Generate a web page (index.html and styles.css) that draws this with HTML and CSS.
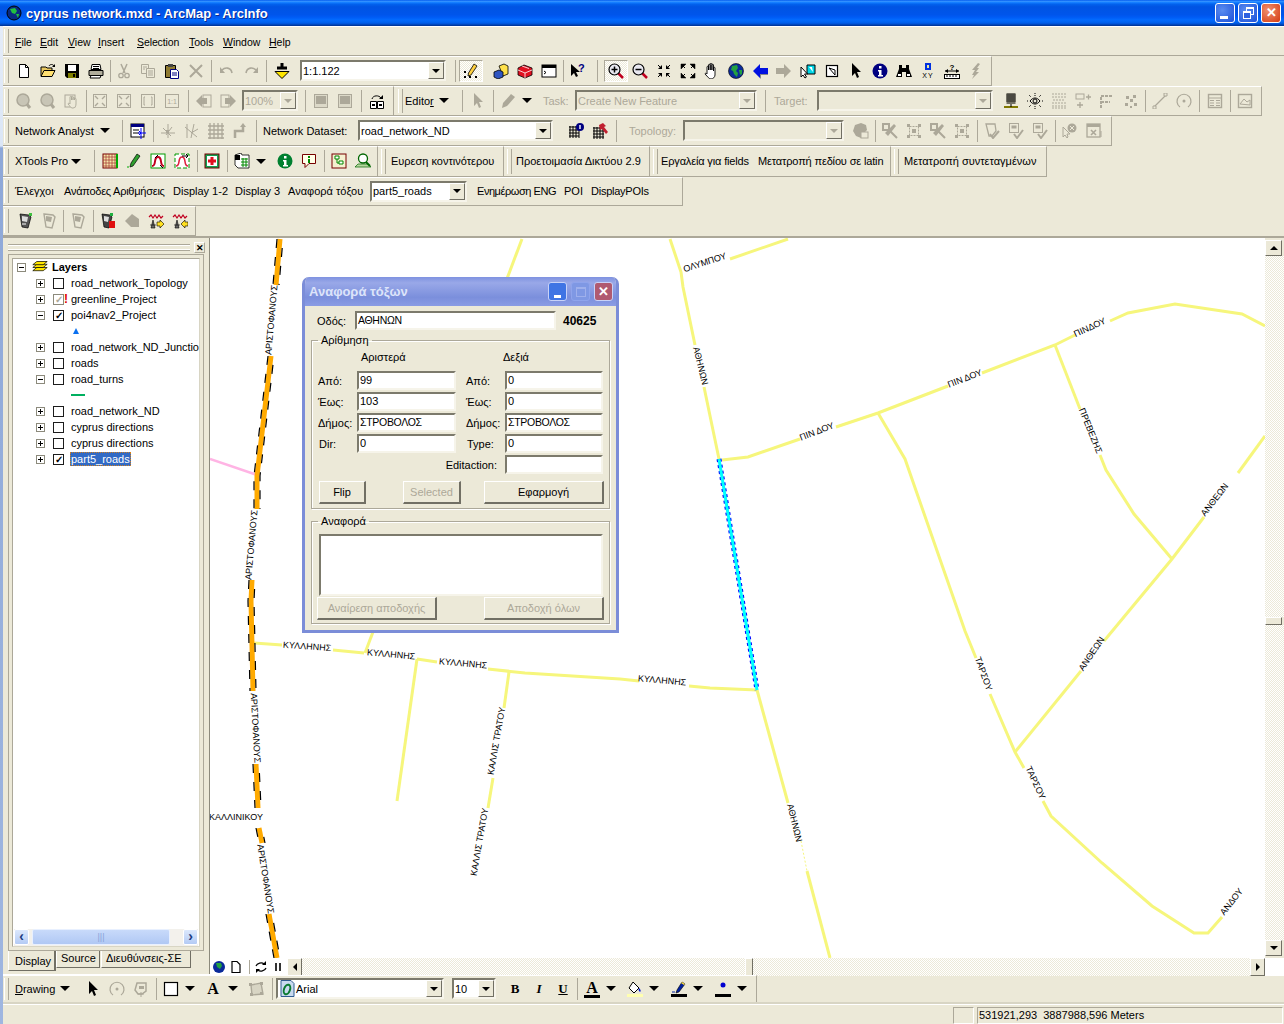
FILE: index.html
```html
<!DOCTYPE html>
<html lang="en">
<head>
    <meta charset="UTF-8">
    <title>cyprus network.mxd - ArcMap - ArcInfo</title>
    <link rel="stylesheet" href="styles.css">
</head>
<body>
<!-- icon sheet -->
<svg class="defs" aria-hidden="true">
    <symbol id="i-new" viewBox="0 0 16 16"><path d="M3.5 1.5h6l3 3v10h-9z" fill="#fff" stroke="#000"/><path d="M9.5 1.5v3h3" fill="none" stroke="#000"/></symbol>
    <symbol id="i-open" viewBox="0 0 16 16"><path d="M1 13V4h5l1 1h5v2" fill="#e8c860" stroke="#000"/><path d="M1 13.5L4 7.5h11l-3 6z" fill="#ffe070" stroke="#000"/><path d="M9 3c1-2 4-2 5 0" fill="none" stroke="#000"/><path d="M15 1v3h-3z"/></symbol>
    <symbol id="i-save" viewBox="0 0 16 16"><path d="M1 1h14v14H3l-2-2z"/><rect x="4" y="2" width="8" height="6" fill="#fff"/><rect x="4" y="10" width="8" height="5" fill="#808000"/><rect x="9" y="11" width="2" height="3"/></symbol>
    <symbol id="i-print" viewBox="0 0 16 16"><path d="M4 1.5h8l1 5H3z" fill="#fff" stroke="#000"/><path d="M1 7.5h14v5H1z" fill="#b0ad9c" stroke="#000"/><path d="M3 12.500h10l-1 2.500H2z" fill="#fff" stroke="#000"/><path d="M5 3.500h6M5 5.500h6" stroke="#000"/></symbol>
    <symbol id="i-cut" viewBox="0 0 16 16"><path d="M5 1l4 9M11 1L7 10" stroke="currentColor" stroke-width="1.500" fill="none"/><circle cx="5" cy="12.500" r="2.200" fill="none" stroke="currentColor" stroke-width="1.300"/><circle cx="11" cy="12.500" r="2.200" fill="none" stroke="currentColor" stroke-width="1.300"/></symbol>
    <symbol id="i-copy" viewBox="0 0 16 16"><path d="M1.500 1.500h7v9h-7z" fill="none" stroke="currentColor"/><path d="M6.500 5.500h8v9h-8z" fill="#ece9d8" stroke="currentColor"/><path d="M3 4h4M3 6h2M8 8h5M8 10h5M8 12h5" stroke="currentColor"/></symbol>
    <symbol id="i-paste" viewBox="0 0 16 16"><path d="M1.500 2.500h10v12h-10z" fill="#8f7a30" stroke="#000"/><rect x="4" y="1" width="5" height="3" fill="#444"/><path d="M6.500 6.500h6l2 2v7h-8z" fill="#fff" stroke="#000080"/><path d="M8 10h5M8 12h5" stroke="#000080"/></symbol>
    <symbol id="i-x" viewBox="0 0 16 16"><path d="M2 2l12 12M14 2L2 14" stroke="currentColor" stroke-width="2" fill="none"/></symbol>
    <symbol id="i-undo" viewBox="0 0 16 16"><path d="M3 7c3-3 9-3 10 3" stroke="currentColor" stroke-width="1.600" fill="none"/><path d="M1 4v6h5z" fill="currentColor"/></symbol>
    <symbol id="i-redo" viewBox="0 0 16 16"><path d="M13 7C10 4 4 4 3 10" stroke="currentColor" stroke-width="1.600" fill="none"/><path d="M15 4v6h-5z" fill="currentColor"/></symbol>
    <symbol id="i-add" viewBox="0 0 16 16"><path d="M1 8.500h14L8 15.500z" fill="#ffe600" stroke="#000"/><path d="M6.500 0h3v3.500H13v3H3v-3h3.500z"/></symbol>
    <symbol id="i-edit" viewBox="0 0 16 16"><path d="M11 1l3 2-6 9-3 1 .5-3z" fill="#ffd040" stroke="#000" stroke-width=".8"/><path d="M1 14h2M6 14h2M12 14h2M2 8v2" stroke="#000" stroke-width="2"/></symbol>
    <symbol id="i-cat" viewBox="0 0 16 16"><path d="M6 3l5-2 4 2v8l-5 2z" fill="#ffe14a" stroke="#000" stroke-width=".8"/><path d="M1 9l5-2 4 2v5l-5 2-4-2z" fill="#2f55c0" stroke="#000" stroke-width=".8"/></symbol>
    <symbol id="i-box" viewBox="0 0 16 16"><path d="M1 5l6-3 8 3v7l-7 3-7-3z" fill="#e01020" stroke="#000" stroke-width=".8"/><path d="M1 7l7 3 7-3M8 10v5M5 3l7 2.500" stroke="#fff" stroke-width=".8" fill="none"/></symbol>
    <symbol id="i-cmd" viewBox="0 0 16 16"><rect x="1" y="2" width="14" height="12" fill="#fff" stroke="#000"/><rect x="1" y="2" width="14" height="3"/><path d="M3 8l2 1.500L3 11" fill="none" stroke="#000"/></symbol>
    <symbol id="i-zin" viewBox="0 0 16 16"><path d="M10 10l5 5" stroke="#c00020" stroke-width="2.500"/><circle cx="6.500" cy="6.500" r="5.500" fill="#e8e8f0" stroke="#000" stroke-width="1.200"/><path d="M6.500 3.500v6M3.500 6.500h6" stroke="#000" stroke-width="1.500"/></symbol>
    <symbol id="i-zout" viewBox="0 0 16 16"><path d="M10 10l5 5" stroke="#c00020" stroke-width="2.500"/><circle cx="6.500" cy="6.500" r="5.500" fill="#e8e8f0" stroke="#000" stroke-width="1.200"/><path d="M3.500 6.500h6" stroke="#000" stroke-width="1.500"/></symbol>
    <symbol id="i-fixin" viewBox="0 0 16 16"><path d="M6 2v4H2zM10 2v4h4zM6 14v-4H2zM10 14v-4h4z" fill="#000"/><path d="M2 2l3 3M14 2l-3 3M2 14l3-3M14 14l-3-3" stroke="#000"/></symbol>
    <symbol id="i-fixout" viewBox="0 0 16 16"><path d="M1 1h5L1 6zM15 1h-5l5 5zM1 15h5l-5-5zM15 15h-5l5-5z" fill="#000" stroke="#000" stroke-width=".5"/><path d="M2 2l3 3M14 2l-3 3M2 14l3-3M14 14l-3-3" stroke="#000"/></symbol>
    <symbol id="i-hand" viewBox="0 0 16 16"><path d="M3 8V4c0-1 1.500-1 1.500 0v3-5c0-1 1.700-1 1.700 0v5-6c0-1 1.700-1 1.700 0v6-5c0-1 1.600-1 1.600 0v6-3c0-1 1.500-1 1.500 0v7c0 2-2 4-4 4H7c-2 0-3-2-6-5 0-1 1-1 2 0z" fill="#fff" stroke="#000" stroke-width=".9"/></symbol>
    <symbol id="i-globe" viewBox="0 0 16 16"><circle cx="8" cy="8" r="7.500" fill="#0a2a9a" stroke="#000" stroke-width=".6"/><path d="M4 3l5-1 1 3-2 3 2 2-1 4-3-3-1-3-2-1zM11 7l3 0 0 4-2 1z" fill="#22a040"/></symbol>
    <symbol id="i-back" viewBox="0 0 16 16"><path d="M1 8l7-7v4h8v6H8v4z" fill="#0010e0"/><path d="M8 15v-4h8v1H9v4z" fill="#888"/></symbol>
    <symbol id="i-fwd" viewBox="0 0 16 16"><path d="M15 8L8 1v4H0v6h8v4z" fill="currentColor"/></symbol>
    <symbol id="i-sel" viewBox="0 0 16 16"><path d="M7 2h8v9H7z" fill="#00d8e8" stroke="#000"/><path d="M9 4l4 5-1-5z" fill="#fff"/><path d="M1 4v10l2-2 2 3 1.500-1-2-3h3z" fill="#fff" stroke="#000"/></symbol>
    <symbol id="i-clear" viewBox="0 0 16 16"><rect x="2.500" y="2.500" width="11" height="11" fill="#fff" stroke="#000" stroke-width="1.200"/><path d="M5 5l6 2 0 5z" fill="none" stroke="#000"/></symbol>
    <symbol id="i-ptr" viewBox="0 0 16 16"><path d="M4 0v13l3-3 2 5 2-1-2-5h4z" fill="currentColor"/></symbol>
    <symbol id="i-info" viewBox="0 0 16 16"><circle cx="8" cy="8" r="7.500" fill="#000080"/><rect x="7" y="3" width="2.500" height="2.500" fill="#fff"/><path d="M6 7h3.500v5H11v1.500H6V12h1V8.500H6z" fill="#fff"/></symbol>
    <symbol id="i-bino" viewBox="0 0 16 16"><path d="M3 2h3v3h4V2h3v4l3 8H10V9H6v5H0l3-8z"/><rect x="2" y="11" width="3" height="2" fill="#fff"/><rect x="11" y="11" width="3" height="2" fill="#fff"/></symbol>
    <symbol id="i-flash" viewBox="0 0 16 16"><path d="M10 0L4 7h3l-3 5h2l-2 4 7-7H8l3-4H9l3-4z" fill="currentColor"/></symbol>
    <symbol id="g-zin" viewBox="0 0 16 16"><path d="M10 10l4 5" stroke="currentColor" stroke-width="3"/><circle cx="7" cy="7" r="6" fill="#c8c5b6" stroke="currentColor" stroke-width="1.500"/></symbol>
    <symbol id="g-hand" viewBox="0 0 16 16"><rect x="1" y="2" width="10" height="12" fill="none" stroke="currentColor"/><path d="M6 8V4c0-1 1.500-1 1.500 0v3-3c0-1 1.500-1 1.500 0v3-2c0-1 1.500-1 1.500 0v2-1c0-1 1.500-1 1.500 0v5c0 2-1 4-3 4H8c-1 0-2-2-4-4 0-1 1-1 2 0z" fill="#ece9d8" stroke="currentColor" stroke-width=".9"/></symbol>
    <symbol id="g-fix" viewBox="0 0 16 16"><rect x="1.500" y="1.500" width="13" height="13" fill="none" stroke="currentColor"/><path d="M3 3l3 3M13 3l-3 3M3 13l3-3M13 13l-3-3" stroke="currentColor" stroke-width="1.400"/></symbol>
    <symbol id="g-frame" viewBox="0 0 16 16"><rect x="1.500" y="1.500" width="13" height="13" fill="none" stroke="currentColor"/><path d="M5 4H4v8h1M11 4h1v8h-1" fill="none" stroke="currentColor"/></symbol>
    <symbol id="g-pback" viewBox="0 0 16 16"><rect x="7" y="2" width="8" height="12" fill="#ece9d8" stroke="currentColor"/><path d="M0 8l6-6v3h5v6H6v3z" fill="currentColor"/></symbol>
    <symbol id="g-pfwd" viewBox="0 0 16 16"><rect x="1" y="2" width="8" height="12" fill="#ece9d8" stroke="currentColor"/><path d="M16 8l-6-6v3H5v6h5v3z" fill="currentColor"/></symbol>
    <symbol id="g-page" viewBox="0 0 16 16"><rect x="1.500" y="1.500" width="13" height="13" fill="#dcd9c8" stroke="currentColor"/><rect x="3" y="3" width="10" height="8" fill="currentColor"/></symbol>
    <symbol id="i-rotframe" viewBox="0 0 16 16"><path d="M1.500 8.500h6v7h-6zM8.500 8.500h6v7h-6z" fill="#fff" stroke="#000"/><path d="M3 11h3v2H3zM10 11h3v2h-3z" fill="#000"/><path d="M3 6c1-4 7-4 9-1" fill="none" stroke="#000"/><path d="M14 2v4h-4z"/></symbol>
    <symbol id="g-pen" viewBox="0 0 16 16"><path d="M11 1l4 3-8 9-5 2 1-5z" fill="currentColor"/></symbol>
    <symbol id="i-grid" viewBox="0 0 16 16"><path d="M1 13h14v2H1z" fill="#ffee00"/><path d="M3 0h10v11H3z" fill="#b0ad9c"/><path d="M3 2h10M3 4h10M3 6h10M3 8h10M5 0v11M7 0v11M9 0v11M11 0v11" stroke="#000" stroke-width=".7"/><path d="M1 14h14M8 11v3" stroke="#000"/></symbol>
    <symbol id="i-eye" viewBox="0 0 16 16"><circle cx="8" cy="8" r="2" fill="none" stroke="#000"/><path d="M3 8c3-4 7-4 10 0-3 4-7 4-10 0z" fill="none" stroke="#000"/><path d="M2 2l2 2M14 2l-2 2M2 14l2-2M14 14l-2-2M8 0v3M8 13v3M0 8h1M15 8h1" stroke="#000" stroke-dasharray="1 1"/></symbol>
    <symbol id="g-att" viewBox="0 0 16 16"><path d="M1 1h14M1 4h14M2 7h12M1 10h14M1 13h14M1 15h14" stroke="currentColor" stroke-dasharray="2 1"/></symbol>
    <symbol id="g-nodes" viewBox="0 0 16 16"><rect x="1" y="1" width="8" height="5" fill="none" stroke="currentColor"/><path d="M11 4h5M13.500 1.500v5M5 9v6M2 12h6" stroke="currentColor" stroke-width="1.300"/></symbol>
    <symbol id="g-step" viewBox="0 0 16 16"><path d="M2 15V3h12M2 9h9" fill="none" stroke="currentColor" stroke-width="2" stroke-dasharray="3 1"/></symbol>
    <symbol id="g-dots" viewBox="0 0 16 16"><path d="M3 3h3v3H3zM10 2h3v3h-3zM7 6h3v3H7zM2 10h3v3H2zM11 10h3v3h-3zM7 13h2v2H7z" fill="currentColor"/></symbol>
    <symbol id="g-line" viewBox="0 0 16 16"><path d="M2 14L14 2" stroke="currentColor" stroke-width="1.200"/><path d="M1 13h3v3H1zM12 0h3v3h-3z" fill="#ece9d8" stroke="currentColor"/></symbol>
    <symbol id="g-rot" viewBox="0 0 16 16"><path d="M4 14a7 7 0 1 1 8 0" fill="none" stroke="currentColor" stroke-width="1.200"/><circle cx="8" cy="8" r="1.500" fill="currentColor"/></symbol>
    <symbol id="g-table" viewBox="0 0 16 16"><rect x="1.500" y="1.500" width="13" height="13" fill="none" stroke="currentColor" stroke-width="1.400"/><path d="M2 5h12M3 7.500h4M9 7.500h4M3 10h4M9 10h4M3 12.500h4M9 12.500h4" stroke="currentColor"/></symbol>
    <symbol id="g-pic" viewBox="0 0 16 16"><rect x="1.500" y="1.500" width="13" height="13" fill="none" stroke="currentColor" stroke-width="1.400"/><path d="M3 11l4-5 3 3 3-2v5z" fill="none" stroke="currentColor"/></symbol>
    <symbol id="i-wiz" viewBox="0 0 16 16"><rect x="1" y="1" width="13" height="13" fill="#fff" stroke="#000"/><rect x="1" y="1" width="13" height="3" fill="#000080"/><path d="M3 7h6M3 10h6" stroke="#000"/><path d="M11 5v11M8 10h8M9 8l2 2-2 2" stroke="#0000ff" fill="none"/></symbol>
    <symbol id="g-net1" viewBox="0 0 16 16"><path d="M8 1v14M1 10h14M3 5l8 8M12 4l-6 8" stroke="currentColor"/><path d="M6 7h3v3H6z" fill="currentColor"/></symbol>
    <symbol id="g-net2" viewBox="0 0 16 16"><path d="M3 1v14M1 4l12 10M10 1l-3 14M14 6l-7 4" stroke="currentColor"/></symbol>
    <symbol id="g-mesh" viewBox="0 0 16 16"><path d="M0 3h16M0 7h16M0 11h16M0 15h16M2 0v16M6 0v16M10 0v16M14 0v16" stroke="currentColor" stroke-width="1.300"/></symbol>
    <symbol id="g-turn" viewBox="0 0 16 16"><path d="M3 15V8h8V3" fill="none" stroke="currentColor" stroke-width="2.500"/><path d="M8 4l3-4 3 4z" fill="currentColor"/></symbol>
    <symbol id="i-gridi" viewBox="0 0 16 16"><path d="M1 4h10M1 7h10M1 10h10M1 13h10M2 3v12M5 3v12M8 3v12M11 3v12" stroke="#000"/><circle cx="12" cy="4" r="4" fill="#000080"/><rect x="11.300" y="2" width="1.400" height="4" fill="#fff"/></symbol>
    <symbol id="i-gridh" viewBox="0 0 16 16"><path d="M1 5h11M1 8h11M1 11h11M1 14h11M2 4v12M5 4v12M8 4v12M11 4v12" stroke="#000"/><path d="M7 2l4-2 3 3-2 1 4 5-2 2-4-5-2 1z" fill="#c02030"/></symbol>
    <symbol id="g-blob" viewBox="0 0 16 16"><path d="M2 2l6-2 5 2 1 5-2 2H8v6L3 13 0 8z" fill="currentColor"/><rect x="8" y="9" width="7" height="6" fill="#ece9d8" stroke="currentColor"/></symbol>
    <symbol id="g-topo1" viewBox="0 0 16 16"><path d="M1 1h6v6H1zM8 8l7 7" stroke="currentColor" stroke-width="2" fill="none"/><path d="M12 1l2 2-8 10-3-3z" fill="currentColor"/></symbol>
    <symbol id="g-topo2" viewBox="0 0 16 16"><rect x="3.500" y="3.500" width="9" height="9" fill="none" stroke="currentColor" stroke-dasharray="2 1"/><path d="M1 1h3v3H1zM12 1h3v3h-3zM1 12h3v3H1zM12 12h3v3h-3zM6 6h4v4H6z" fill="currentColor"/></symbol>
    <symbol id="g-check1" viewBox="0 0 16 16"><path d="M2 1h9l1 7-4 5H5z" fill="none" stroke="currentColor" stroke-width="1.300"/><path d="M6 11l3 4 6-7" fill="none" stroke="currentColor" stroke-width="2"/></symbol>
    <symbol id="g-check2" viewBox="0 0 16 16"><rect x="1.500" y="0.500" width="9" height="9" fill="none" stroke="currentColor"/><rect x="3.500" y="2.500" width="5" height="3" fill="currentColor"/><path d="M6 11l3 4 6-8" fill="none" stroke="currentColor" stroke-width="2"/></symbol>
    <symbol id="g-fixerr" viewBox="0 0 16 16"><path d="M1 4v10l2-2 2 3 1-1-1-3h3z" fill="none" stroke="currentColor"/><circle cx="10" cy="5" r="4.500" fill="currentColor"/><path d="M8 3l4 4M12 3L8 7" stroke="#ece9d8"/></symbol>
    <symbol id="g-errwin" viewBox="0 0 16 16"><rect x="1" y="1" width="13" height="13" fill="none" stroke="currentColor" stroke-width="1.300"/><rect x="1" y="1" width="13" height="3" fill="currentColor"/><path d="M5 7l5 5M10 7l-5 5" stroke="currentColor" stroke-width="1.600"/><path d="M15 8v6" stroke="currentColor"/></symbol>
    <symbol id="x-table" viewBox="0 0 16 16"><rect x="1" y="1" width="14" height="14" fill="#f6e8a8" stroke="#700"/><path d="M1 4h14M1 7h14M1 10h14M1 13h14M4 1v14M7 1v14M10 1v14M13 1v14" stroke="#a03030" stroke-width=".7"/><path d="M15 1v14" stroke="#0a0" stroke-width="2"/></symbol>
    <symbol id="x-pen" viewBox="0 0 16 16"><path d="M11 1l3 2-7 10-3 1 1-4z" fill="#30a030" stroke="#000" stroke-width=".7"/><path d="M1 14h2" stroke="#0a0"/></symbol>
    <symbol id="x-curve" viewBox="0 0 16 16"><rect x="1" y="1" width="14" height="14" fill="#fff" stroke="#090"/><path d="M2 13c5 0 1-9 6-9 5 0 1 9 6 9" fill="none" stroke="#c00020" stroke-width="2"/><path d="M5 5l3-3M10 12l3 3" stroke="#000"/></symbol>
    <symbol id="x-curve2" viewBox="0 0 16 16"><path d="M1 1h14v14H1z" fill="#fff" stroke="#090" stroke-dasharray="4 2"/><path d="M2 13c5 0 1-9 6-9 5 0 1 9 6 9" fill="none" stroke="#e02040" stroke-width="1.600"/><path d="M8 3h6M12 1l2 2-2 2" fill="none" stroke="#000"/></symbol>
    <symbol id="x-plus" viewBox="0 0 16 16"><rect x="1" y="1" width="14" height="14" fill="#10a050" stroke="#700"/><rect x="3" y="3" width="10" height="10" fill="#fff"/><path d="M6.500 4h3v2.500H12v3H9.500V12h-3V9.500H4v-3h2.500z" fill="#e01020"/></symbol>
    <symbol id="x-doc" viewBox="0 0 16 16"><path d="M1 2l6-2 1 2h7v13H4l-3-3z" fill="#fff" stroke="#000" stroke-width=".8"/><path d="M1 2h5v5H1z"/><path d="M7 6h7M7 9h7M7 12h7M9 5v9M12 5v9" stroke="#080" /></symbol>
    <symbol id="x-info" viewBox="0 0 16 16"><circle cx="8" cy="8" r="7.500" fill="#008030"/><rect x="7" y="3" width="2.500" height="2.500" fill="#fff"/><path d="M6 7h3.500v5H11v1.500H6V12h1V8.500H6z" fill="#fff"/></symbol>
    <symbol id="x-say" viewBox="0 0 16 16"><path d="M1.500 1.500h13v9H8l-4 4v-4H1.500z" fill="#ffffe8" stroke="#700"/><rect x="7" y="3" width="2" height="2" fill="#080"/><rect x="7" y="6" width="2" height="4" fill="#080"/></symbol>
    <symbol id="x-tree" viewBox="0 0 16 16"><rect x="1" y="1" width="14" height="14" fill="#f4f0d0" stroke="#700"/><path d="M4 3h4v3H4zM8 8h4v3H8z" fill="#fff" stroke="#080"/><path d="M6 6v4h2" fill="none" stroke="#080"/></symbol>
    <symbol id="x-find" viewBox="0 0 16 16"><path d="M0 14h16l-3-3H3z" fill="#b8d8a0" stroke="#060" stroke-width=".7"/><circle cx="8" cy="5.500" r="4.500" fill="#fff" stroke="#060" stroke-width="1.300"/><path d="M11 9l4 4" stroke="#060" stroke-width="2"/></symbol>
    <symbol id="p-dev" viewBox="0 0 16 16"><path d="M3 1l9 1 2 2-3 11-6-1z" fill="#555" stroke="#000" stroke-width=".7"/><path d="M5 3l6 1-1 5-5-1z" fill="#ddd"/><path d="M12 0h3v3h-3z" fill="#40c040"/><path d="M5 11h4" stroke="#fff"/></symbol>
    <symbol id="p-off" viewBox="0 0 16 16"><path d="M3 1l9 1 2 2-3 11-6-1z" fill="none" stroke="currentColor" stroke-width="1.400"/><path d="M5 3l6 1-1 5-5-1z" fill="currentColor"/></symbol>
    <symbol id="p-bad" viewBox="0 0 16 16"><path d="M2 1l8 1 2 2-3 11-5-1z" fill="#444" stroke="#000" stroke-width=".7"/><path d="M4 3l5 1-1 5-4-1z" fill="#ddd"/><rect x="9" y="8" width="6" height="7" fill="#e01010"/><path d="M10 0h3v3h-3z" fill="#20b040"/></symbol>
    <symbol id="p-blob" viewBox="0 0 16 16"><path d="M1 8l7-7 7 5v8H7z" fill="currentColor"/></symbol>
    <symbol id="p-wave" viewBox="0 0 16 16"><path d="M1 4l2-2 2 3 2-3 2 3 2-3 2 3 2-2" fill="none" stroke="#c00020" stroke-width="1.200"/><path d="M3 15l2-8 2 8zM2 12h6" fill="#666" stroke="#000" stroke-width=".6"/><path d="M9 9h3V7l4 4-4 4v-2H9z" fill="#ffe020" stroke="#000" stroke-width=".6"/></symbol>
    <symbol id="p-wave2" viewBox="0 0 16 16"><path d="M1 4l2-2 2 3 2-3 2 3 2-3 2 3 2-2" fill="none" stroke="#c00020" stroke-width="1.200"/><path d="M3 15l2-8 2 8zM2 12h6" fill="#666" stroke="#000" stroke-width=".6"/><path d="M16 9h-3V7l-4 4 4 4v-2h3z" fill="#ffe020" stroke="#000" stroke-width=".6"/></symbol>
    <symbol id="d-rot" viewBox="0 0 16 16"><path d="M4 14a7 7 0 1 1 8 0" fill="none" stroke="#aca899" stroke-width="1.200"/><circle cx="8" cy="8" r="1.500" fill="#aca899"/></symbol>
    <symbol id="d-vert" viewBox="0 0 16 16"><path d="M4 2h9v8l-4 3H5l-3-4z" fill="none" stroke="#aca899" stroke-width="1.500"/><path d="M6 5h5v3H6z" fill="#aca899"/><path d="M8 11v5M5 13h6" stroke="#aca899"/></symbol>
    <symbol id="d-rect" viewBox="0 0 16 16"><rect x="1.500" y="1.500" width="13" height="13" fill="#fff" stroke="#000" stroke-width="1.200"/></symbol>
    <symbol id="d-shape" viewBox="0 0 16 16"><path d="M3 4l10-2 2 11-11 1z" fill="#d8d5c4" stroke="#aca899" stroke-width="1.400"/><path d="M1 2h3v3H1zM12 1h3v3h-3zM2 12h3v3H2zM12 11h3v3h-3z" fill="#aca899"/></symbol>
    <symbol id="d-fill" viewBox="0 0 16 16"><path d="M6 1l6 6-5 5-5-5z" fill="#fff" stroke="#000"/><path d="M12 7c2 2 2 3 1 4-1-1-2-2-1-4z" fill="#0018d0"/><rect x="0" y="13" width="16" height="3" fill="#ffffb0"/></symbol>
    <symbol id="d-lineclr" viewBox="0 0 16 16"><path d="M11 1l3 2-6 8-3 1 1-3z" fill="#0020a0" stroke="#000" stroke-width=".6"/><path d="M11 1l3 2-1 1-3-2z" fill="#ffe040"/><path d="M1 11h3" stroke="#0020a0"/><rect x="0" y="13" width="16" height="3"/></symbol>
    <symbol id="d-dot" viewBox="0 0 16 16"><circle cx="8" cy="4" r="2.500" fill="#0000d0"/><rect x="0" y="13" width="16" height="3"/></symbol>
    <symbol id="d-font" viewBox="0 0 16 16"><path d="M2 0h10l3 3v13H2z" fill="#c8daf0" stroke="#305c90"/><ellipse cx="8" cy="9" rx="3" ry="5" fill="none" stroke="#0a7a30" stroke-width="2" transform="rotate(20 8 9)"/></symbol>
    <symbol id="s-globe" viewBox="0 0 16 16"><circle cx="8" cy="8" r="6" fill="#0a2a9a"/><path d="M5 4l5 0 1 3-2 3-3-2z" fill="#22a040"/></symbol>
    <symbol id="s-page" viewBox="0 0 16 16"><path d="M4 2.500h5l3 3v8H4z" fill="#fff" stroke="#000" stroke-width="1.200"/></symbol>
    <symbol id="s-ref" viewBox="0 0 16 16"><path d="M3 7c1-3 6-4 8-2M13 9c-1 3-6 4-8 2" fill="none" stroke="#000" stroke-width="1.200"/><path d="M13 2v4H9zM3 14v-4h4z"/></symbol>
    <symbol id="s-pause" viewBox="0 0 16 16"><path d="M5 4h2v8H5zM9 4h2v8H9z" fill="#333"/></symbol>
    <symbol id="t-layers" viewBox="0 0 20 16"><path d="M1 12l5-4h13l-5 4z" fill="#ffe600" stroke="#000" stroke-width=".9"/><path d="M1 8l5-4h13l-5 4z" fill="#ffe600" stroke="#000" stroke-width=".9"/><path d="M1 4.500L6 .5h13l-5 4z" fill="#ffe600" stroke="#000" stroke-width=".9"/></symbol>
</svg>

<div class="win">
    <div class="titlebar">
        <svg class="appicon" viewBox="0 0 16 16"><circle cx="8" cy="8" r="7" fill="#0a2a80" stroke="#000"/><path d="M4 4l5-1 2 3-2 3-3-1zM10 9l3 0-1 4z" fill="#22c040"/></svg>
        <span class="titletext">cyprus network.mxd - ArcMap - ArcInfo</span>
        <div class="winbtns">
            <span class="wbtn"><i class="wmin"></i></span>
            <span class="wbtn"><i class="wmax back"></i><i class="wmax front"></i></span>
            <span class="wbtn wclose">✕</span>
        </div>
    </div>

    <div class="menubar">
        <span><u>F</u>ile</span><span><u>E</u>dit</span><span><u>V</u>iew</span><span><u>I</u>nsert</span><span><u>S</u>election</span><span><u>T</u>ools</span><span><u>W</u>indow</span><span><u>H</u>elp</span>
    </div>

    <div class="row r30">
        <div class="bar w992 pl12">
            <b class="btn"><svg><use href="#i-new"/></svg></b><b class="btn"><svg><use href="#i-open"/></svg></b><b class="btn"><svg><use href="#i-save"/></svg></b><b class="btn"><svg><use href="#i-print"/></svg></b>
            <i class="sep s4"></i>
            <b class="btn off"><svg><use href="#i-cut"/></svg></b><b class="btn off"><svg><use href="#i-copy"/></svg></b><b class="btn"><svg><use href="#i-paste"/></svg></b><b class="btn off"><svg><use href="#i-x"/></svg></b>
            <i class="sep s7"></i>
            <b class="btn off"><svg><use href="#i-undo"/></svg></b><b class="btn off"><svg><use href="#i-redo"/></svg></b>
            <i class="sep s7"></i>
            <b class="btn"><svg><use href="#i-add"/></svg></b>
            <div class="combo c146 ml6"><span class="val">1:1.122</span><b class="drop"></b></div>
            <i class="sep s13 r"></i>
            <b class="btn pressed"><svg><use href="#i-edit"/></svg></b>
            <i class="sep s6 noline"></i>
            <b class="btn"><svg><use href="#i-cat"/></svg></b><b class="btn"><svg><use href="#i-box"/></svg></b><b class="btn"><svg><use href="#i-cmd"/></svg></b>
            <i class="sep s5"></i>
            <b class="btn"><svg viewBox="0 0 16 16"><path d="M1 1v12l3-3 2 4 2-1-2-4h4z"/><text x="8" y="9" font-size="11" font-weight="700" font-family="Liberation Sans" fill="#000080">?</text></svg></b>
            <i class="sep s14"></i>
            <b class="btn pressed"><svg><use href="#i-zin"/></svg></b><b class="btn"><svg><use href="#i-zout"/></svg></b><b class="btn"><svg><use href="#i-fixin"/></svg></b><b class="btn"><svg><use href="#i-fixout"/></svg></b><b class="btn"><svg><use href="#i-hand"/></svg></b><b class="btn"><svg><use href="#i-globe"/></svg></b><b class="btn"><svg><use href="#i-back"/></svg></b><b class="btn off"><svg><use href="#i-fwd"/></svg></b><b class="btn"><svg><use href="#i-sel"/></svg></b><b class="btn"><svg><use href="#i-clear"/></svg></b><b class="btn"><svg><use href="#i-ptr"/></svg></b><b class="btn"><svg><use href="#i-info"/></svg></b><b class="btn"><svg><use href="#i-bino"/></svg></b>
            <b class="btn"><svg viewBox="0 0 16 16"><rect x="5" y="0" width="6" height="7" fill="#0030e0"/><rect x="7" y="2" width="2" height="3" fill="#e8e8a0"/><text x="8" y="15" text-anchor="middle" font-size="7" letter-spacing="1" font-family="Liberation Sans" fill="#000">XY</text></svg></b>
            <b class="btn"><svg viewBox="0 0 16 16"><path d="M1 8h14" stroke="#000"/><path d="M1 8l3-2v4zM15 8l-3-2v4z"/><text x="8" y="7" text-anchor="middle" font-size="8" font-weight="700" font-family="Liberation Sans" fill="#000">?</text><rect x="0.500" y="11.500" width="15" height="4" fill="#fff" stroke="#000"/><path d="M3 12v2M6 12v2M9 12v2M12 12v2" stroke="#000"/></svg></b>
            <b class="btn off"><svg><use href="#i-flash"/></svg></b>
        </div>
    </div>

    <div class="row r30">
        <div class="bar w394 pl12">
            <b class="btn off"><svg><use href="#g-zin"/></svg></b><b class="btn off"><svg><use href="#g-zin"/></svg></b><b class="btn off"><svg><use href="#g-hand"/></svg></b>
            <i class="sep s4"></i>
            <b class="btn off"><svg><use href="#g-fix"/></svg></b><b class="btn off"><svg><use href="#g-fix"/></svg></b><b class="btn off"><svg><use href="#g-frame"/></svg></b>
            <b class="btn off"><svg viewBox="0 0 16 16"><rect x="1.500" y="1.500" width="13" height="13" fill="none" stroke="currentColor"/><text x="8" y="11" text-anchor="middle" font-size="7" font-family="Liberation Sans" fill="currentColor">1:1</text></svg></b>
            <i class="sep s8"></i>
            <b class="btn off"><svg><use href="#g-pback"/></svg></b><b class="btn off"><svg><use href="#g-pfwd"/></svg></b>
            <div class="combo c56 ml2 dis"><span class="val">100%</span><b class="drop"></b></div>
            <i class="sep s11 r"></i>
            <b class="btn off"><svg><use href="#g-page"/></svg></b><b class="btn off"><svg><use href="#g-page"/></svg></b>
            <i class="sep s8"></i>
            <b class="btn"><svg><use href="#i-rotframe"/></svg></b>
        </div>
        <div class="bar w868 pl11">
            <span class="item w50"><span>Edito<u>r</u></span><i class="arrow mr6"></i></span>
            <i class="sep s11 r"></i>
            <b class="btn off"><svg><use href="#i-ptr"/></svg></b>
            <i class="sep s6"></i>
            <b class="btn off"><svg><use href="#g-pen"/></svg></b><i class="arrow ml2 mr4"></i>
            <span class="lbl off ml7 w32">Task:</span>
            <div class="combo c182 dis"><span class="val">Create New Feature</span><b class="drop"></b></div>
            <i class="sep s17"></i>
            <span class="lbl off w43">Target:</span>
            <div class="combo c176 dis"><span class="val"></span><b class="drop"></b></div>
            <i class="sep s6 noline"></i>
            <b class="btn"><svg><use href="#i-grid"/></svg></b><b class="btn"><svg><use href="#i-eye"/></svg></b><b class="btn off"><svg><use href="#g-att"/></svg></b><b class="btn off"><svg><use href="#g-nodes"/></svg></b><b class="btn off"><svg><use href="#g-step"/></svg></b><b class="btn off"><svg><use href="#g-dots"/></svg></b>
            <i class="sep s5"></i>
            <b class="btn off"><svg><use href="#g-line"/></svg></b><b class="btn off"><svg><use href="#g-rot"/></svg></b>
            <i class="sep s7"></i>
            <b class="btn off"><svg><use href="#g-table"/></svg></b>
            <i class="sep s6"></i>
            <b class="btn off"><svg><use href="#g-pic"/></svg></b>
        </div>
    </div>

    <div class="row r30">
        <div class="bar w1112 pl15">
            <span class="item w95"><span>Network Analyst</span><i class="arrow"></i></span>
            <i class="sep s16 r"></i>
            <b class="btn"><svg><use href="#i-wiz"/></svg></b>
            <i class="sep s6"></i>
            <b class="btn off"><svg><use href="#g-net1"/></svg></b><b class="btn off"><svg><use href="#g-net2"/></svg></b><b class="btn off"><svg><use href="#g-mesh"/></svg></b><b class="btn off"><svg><use href="#g-turn"/></svg></b>
            <i class="sep s11 l"></i>
            <span class="lbl w95">Network Dataset:</span>
            <div class="combo c195"><span class="val">road_network_ND</span><b class="drop"></b></div>
            <i class="sep s11 noline"></i>
            <b class="btn"><svg><use href="#i-gridi"/></svg></b><b class="btn"><svg><use href="#i-gridh"/></svg></b>
            <i class="sep s17 l"></i>
            <span class="lbl off w54">Topology:</span>
            <div class="combo c161 dis"><span class="val"></span><b class="drop"></b></div>
            <i class="sep s5 noline"></i>
            <b class="btn off"><svg><use href="#g-blob"/></svg></b>
            <i class="sep s5"></i>
            <b class="btn off"><svg><use href="#g-topo1"/></svg></b><b class="btn off"><svg><use href="#g-topo2"/></svg></b><b class="btn off"><svg><use href="#g-topo1"/></svg></b><b class="btn off"><svg><use href="#g-topo2"/></svg></b>
            <i class="sep s6"></i>
            <b class="btn off"><svg><use href="#g-check1"/></svg></b><b class="btn off"><svg><use href="#g-check2"/></svg></b><b class="btn off"><svg><use href="#g-check2"/></svg></b>
            <i class="sep s6"></i>
            <b class="btn off"><svg><use href="#g-fixerr"/></svg></b><b class="btn off"><svg><use href="#g-errwin"/></svg></b>
        </div>
    </div>

    <div class="row r31">
        <div class="bar w378 pl15">
            <span class="item w66"><span>XTools Pro</span><i class="arrow"></i></span>
            <i class="sep s17 r"></i>
            <b class="btn"><svg><use href="#x-table"/></svg></b><b class="btn"><svg><use href="#x-pen"/></svg></b><b class="btn"><svg><use href="#x-curve"/></svg></b><b class="btn"><svg><use href="#x-curve2"/></svg></b>
            <i class="sep s6"></i>
            <b class="btn"><svg><use href="#x-plus"/></svg></b>
            <i class="sep s6"></i>
            <b class="btn"><svg><use href="#x-doc"/></svg></b><i class="arrow ml2 mr7"></i>
            <b class="btn"><svg><use href="#x-info"/></svg></b><b class="btn"><svg><use href="#x-say"/></svg></b>
            <i class="sep s6"></i>
            <b class="btn"><svg><use href="#x-tree"/></svg></b><b class="btn"><svg><use href="#x-find"/></svg></b>
        </div>
        <div class="bar w126 pl13 hnd"><span class="lbl">Ευρεση κοντινότερου</span></div>
        <div class="bar w146 pl12 hnd"><span class="lbl">Προετοιμασία Δικτύου 2.9</span></div>
        <div class="bar w241 pl11 hnd"><span class="lbl w97 tight3">Εργαλεία για fields</span><span class="lbl tight3">Μετατροπή πεδίου σε latin</span></div>
        <div class="bar w156 pl13 hnd"><span class="lbl">Μετατροπή συντεταγμένων</span></div>
    </div>

    <div class="row r29">
        <div class="bar w683 pl15">
            <span class="lbl t49">Έλεγχοι</span><span class="lbl t109 tight1">Ανάποδες Αριθμήσεις</span><span class="lbl t62">Display 1-2</span><span class="lbl t53">Display 3</span><span class="lbl t82">Αναφορά τόξου</span>
            <div class="combo c97"><span class="val">part5_roads</span><b class="drop"></b></div>
            <span class="lbl t87 ml10 tight2">Ενημέρωση ENG</span><span class="lbl t27">POI</span><span class="lbl tight1">DisplayPOIs</span>
        </div>
    </div>

    <div class="row r30">
        <div class="bar w196 pl13">
            <b class="btn"><svg><use href="#p-dev"/></svg></b><b class="btn off"><svg><use href="#p-off"/></svg></b>
            <i class="sep s5"></i>
            <b class="btn off"><svg><use href="#p-off"/></svg></b>
            <i class="sep s6"></i>
            <b class="btn"><svg><use href="#p-bad"/></svg></b><b class="btn off"><svg><use href="#p-blob"/></svg></b><b class="btn"><svg><use href="#p-wave"/></svg></b><b class="btn"><svg><use href="#p-wave2"/></svg></b>
        </div>
    </div>

    <div class="workspace">
        <div class="toc">
            <div class="tochead"><span class="gripper"></span><span class="tocx">✕</span></div>
            <div class="tree">
                <div class="node top"><i class="box minus"></i><svg class="layers" viewBox="0 0 20 16"><use href="#t-layers"/></svg><strong>Layers</strong></div>
                <div class="node"><i class="box plus"></i><i class="chk"></i><span>road_network_Topology</span></div>
                <div class="node"><i class="box plus"></i><i class="chk warn">✓</i><em class="bang">!</em><span>greenline_Project</span></div>
                <div class="node"><i class="box minus"></i><i class="chk">✓</i><span>poi4nav2_Project</span></div>
                <div class="node"><svg class="sym-point" viewBox="0 0 8 6"><path d="M4 0l3 6H1z" fill="#0a70f0"/></svg></div>
                <div class="node"><i class="box plus"></i><i class="chk"></i><span class="snug">road_network_ND_Junctio</span></div>
                <div class="node"><i class="box plus"></i><i class="chk"></i><span>roads</span></div>
                <div class="node"><i class="box minus"></i><i class="chk"></i><span>road_turns</span></div>
                <div class="node"><i class="sym-line"></i></div>
                <div class="node"><i class="box plus"></i><i class="chk"></i><span>road_network_ND</span></div>
                <div class="node"><i class="box plus"></i><i class="chk"></i><span>cyprus directions</span></div>
                <div class="node"><i class="box plus"></i><i class="chk"></i><span>cyprus directions</span></div>
                <div class="node"><i class="box plus"></i><i class="chk">✓</i><span class="selected">part5_roads</span></div>
                <div class="xpscroll">
                    <b class="xpbtn">‹</b><b class="xpthumb">|||</b><b class="xpbtn">›</b>
                </div>
            </div>
            <div class="tabs">
                <span class="tab active">Display</span><span class="tab">Source</span><span class="tab">Διευθύνσεις-ΣΕ</span>
            </div>
        </div>

        <div class="mapcol">
            <div class="maprow">
                <svg class="map" viewBox="210 237 1055 720">
                    <g class="pink"><polyline points="210,458 257,474"/></g>
                    <g class="road">
                        <polyline points="670,238 681,271 683,286 695,344"/>
                        <polyline points="704,386 719,458"/>
                        <polyline points="757,689 788,802"/>
                        <polyline points="807,870 830,957"/>
                        <polyline points="730,258 788,238"/>
                        <polyline points="522,238 365,652"/>
                        <polyline points="722,459 748,456 800,438"/>
                        <polyline points="836,426 878,412 948,385"/>
                        <polyline points="982,372 1055,344 1075,334"/>
                        <polyline points="1110,320 1128,312 1175,303 1242,313 1265,325"/>
                        <polyline points="878,412 905,458 965,630 976,657"/>
                        <polyline points="990,693 1015,751 1024,767"/>
                        <polyline points="1043,800 1051,815 1102,862 1152,905 1194,932 1208,932 1222,916"/>
                        <polyline points="1055,344 1080,408"/>
                        <polyline points="1100,454 1106,469 1134,513 1172,558"/>
                        <polyline points="1265,435 1238,472"/>
                        <polyline points="1204,516 1172,558 1104,640"/>
                        <polyline points="1081,670 1015,751"/>
                        <polyline points="253,642 282,644"/>
                        <polyline points="333,649 364,652"/>
                        <polyline points="417,658 437,661"/>
                        <polyline points="488,668 525,672 620,678 639,680"/>
                        <polyline points="689,685 710,687 757,689"/>
                        <polyline points="417,658 397,800"/>
                        <polyline points="509,671 504,707"/>
                        <polyline points="493,777 488,807"/>
                    </g>
                    <polyline class="road-thin" points="801,840 807,870"/>
                    <g class="arist">
                        <polyline points="280,238 276,284"/>
                        <polyline points="271,355 257,475 257,508"/>
                        <polyline points="252,579 251,600 253,690"/>
                        <polyline points="256,763 258,807"/>
                        <polyline points="259,827 262,842"/>
                        <polyline points="269,913 277,957"/>
                    </g>
                    <g class="arist-dash left">
                        <polyline points="280,238 276,284"/>
                        <polyline points="271,355 257,475 257,508"/>
                        <polyline points="252,579 251,600 253,690"/>
                        <polyline points="256,763 258,807"/>
                        <polyline points="259,827 262,842"/>
                        <polyline points="269,913 277,957"/>
                    </g>
                    <g class="arist-dash right">
                        <polyline points="280,238 276,284"/>
                        <polyline points="271,355 257,475 257,508"/>
                        <polyline points="252,579 251,600 253,690"/>
                        <polyline points="256,763 258,807"/>
                        <polyline points="259,827 262,842"/>
                        <polyline points="269,913 277,957"/>
                    </g>
                    <polyline class="picked-dash" points="719,458 757,689"/>
                    <polyline class="picked" points="719,458 757,689"/>
                    <g class="labels">
                        <text transform="translate(272 319) rotate(-85)">ΑΡΙΣΤΟΦΑΝΟΥΣ</text>
                        <text transform="translate(252 544) rotate(-85)">ΑΡΙΣΤΟΦΑΝΟΥΣ</text>
                        <text transform="translate(255 727) rotate(87)">ΑΡΙΣΤΟΦΑΝΟΥΣ</text>
                        <text transform="translate(265 878) rotate(81)">ΑΡΙΣΤΟΦΑΝΟΥΣ</text>
                        <text transform="translate(236 817)">ΚΑΛΛΙΝΙΚΟΥ</text>
                        <text transform="translate(307 646) rotate(4)">ΚΥΛΛΗΝΗΣ</text>
                        <text transform="translate(391 654) rotate(5)">ΚΥΛΛΗΝΗΣ</text>
                        <text transform="translate(463 663) rotate(5)">ΚΥΛΛΗΝΗΣ</text>
                        <text transform="translate(662 680) rotate(5)">ΚΥΛΛΗΝΗΣ</text>
                        <text transform="translate(497 740) rotate(-80)">ΚΑΛΛΙΣ ΤΡΑΤΟΥ</text>
                        <text transform="translate(480 841) rotate(-80)">ΚΑΛΛΙΣ ΤΡΑΤΟΥ</text>
                        <text transform="translate(705 262) rotate(-18)">ΟΛΥΜΠΟΥ</text>
                        <text transform="translate(700 365) rotate(76)">ΑΘΗΝΩΝ</text>
                        <text transform="translate(794 822) rotate(76)">ΑΘΗΝΩΝ</text>
                        <text transform="translate(817 431) rotate(-21)">ΠΙΝ ΔΟΥ</text>
                        <text transform="translate(965 378) rotate(-21)">ΠΙΝ ΔΟΥ</text>
                        <text transform="translate(1090 327) rotate(-25)">ΠΙΝΔΟΥ</text>
                        <text transform="translate(1090 430) rotate(68)">ΠΡΕΒΕΖΗΣ</text>
                        <text transform="translate(1215 499) rotate(-52)">ΑΝΘΕΩΝ</text>
                        <text transform="translate(1092 653) rotate(-56)">ΑΝΘΕΩΝ</text>
                        <text transform="translate(983 673) rotate(70)">ΤΑΡΣΟΥ</text>
                        <text transform="translate(1035 782) rotate(65)">ΤΑΡΣΟΥ</text>
                        <text transform="translate(1232 901) rotate(-52)">ΑΝΔΟΥ</text>
                    </g>
                </svg>
                <div class="vscroll">
                    <b class="sbtn"><i class="tri up"></i></b>
                    <div class="track grow1"></div>
                    <b class="sthumb v"></b>
                    <div class="track grow2"></div>
                    <b class="sbtn"><i class="tri down"></i></b>
                </div>
            </div>
            <div class="hrow">
                <div class="viewbtns">
                    <svg><use href="#s-globe"/></svg><svg><use href="#s-page"/></svg><i class="vline"></i><svg><use href="#s-ref"/></svg><svg><use href="#s-pause"/></svg>
                </div>
                <b class="sbtn h"><i class="tri left"></i></b>
                <div class="track hl"></div>
                <b class="sthumb h"></b>
                <div class="track hr"></div>
                <b class="sbtn h"><i class="tri right"></i></b>
                <div class="corner"></div>
            </div>
        </div>
    </div>

    <div class="drawrow">
        <div class="bar w757 pl15 nob">
            <span class="item w55"><span><u>D</u>rawing</span><i class="arrow"></i></span>
            <i class="sep s11 noline"></i>
            <b class="btn blk"><svg><use href="#i-ptr"/></svg></b><b class="btn"><svg><use href="#d-rot"/></svg></b><b class="btn"><svg><use href="#d-vert"/></svg></b>
            <i class="sep s6"></i>
            <b class="btn"><svg><use href="#d-rect"/></svg></b><i class="arrow ml2 mr6"></i>
            <b class="btn letter">A</b><i class="arrow ml3 mr6"></i>
            <b class="btn"><svg><use href="#d-shape"/></svg></b>
            <i class="sep s8"></i>
            <div class="combo c168 font"><svg><use href="#d-font"/></svg><span class="val">Arial</span><b class="drop"></b></div>
            <div class="combo c44 ml8"><span class="val">10</span><b class="drop"></b></div>
            <i class="sep s7 noline"></i>
            <b class="btn letter sm">B</b><b class="btn letter sm it">I</b><b class="btn letter sm un">U</b>
            <i class="sep s5"></i>
            <b class="btn letter bar-a">A</b><i class="arrow ml2 mr7"></i>
            <b class="btn"><svg><use href="#d-fill"/></svg></b><i class="arrow ml2 mr8"></i>
            <b class="btn"><svg><use href="#d-lineclr"/></svg></b><i class="arrow ml2 mr8"></i>
            <b class="btn"><svg><use href="#d-dot"/></svg></b><i class="arrow ml2"></i>
        </div>
    </div>

    <div class="statusbar">
        <span class="cell small"></span>
        <span class="cell coords">531921,293&nbsp; 3887988,596 Meters</span>
    </div>

    <!-- floating dialog -->
    <div class="dialog">
        <div class="dlgtitle">
            <span>Αναφορά τόξων</span>
            <div class="dlgbtns">
                <b class="dbtn min"><i></i></b><b class="dbtn max"><i></i></b><b class="dbtn cls">✕</b>
            </div>
        </div>
        <div class="dlgbody">
            <div class="street">
                <label>Οδός:</label>
                <div class="field long gk">ΑΘΗΝΩΝ</div>
                <strong>40625</strong>
            </div>
            <fieldset class="group num">
                <legend>Αρίθμηση</legend>
                <div class="heads"><span>Αριστερά</span><span>Δεξιά</span></div>
                <div class="grid">
                    <label>Από:</label><div class="field">99</div><label>Από:</label><div class="field">0</div>
                    <label>Έως:</label><div class="field">103</div><label>Έως:</label><div class="field">0</div>
                    <label>Δήμος:</label><div class="field gk">ΣΤΡΟΒΟΛΟΣ</div><label>Δήμος:</label><div class="field gk">ΣΤΡΟΒΟΛΟΣ</div>
                    <label class="ind">Dir:</label><div class="field">0</div><label class="ind">Type:</label><div class="field">0</div>
                    <label class="edit">Editaction:</label><div class="field"></div>
                </div>
                <div class="actions">
                    <button class="flip">Flip</button>
                    <button class="sel" disabled>Selected</button>
                    <button class="apply">Εφαρμογή</button>
                </div>
            </fieldset>
            <fieldset class="group rep">
                <legend>Αναφορά</legend>
                <div class="field memo"></div>
                <div class="actions two">
                    <button class="apply" disabled>Αναίρεση αποδοχής</button>
                    <button class="apply" disabled>Αποδοχή όλων</button>
                </div>
            </fieldset>
        </div>
    </div>
</div>
</body>
</html>
```

FILE: styles.css
```css
* {
    box-sizing: border-box;
}
html, body {
    margin: 0;
    padding: 0;
    overflow: hidden;
}
body {
    font-family: "Liberation Sans", Arial, sans-serif;
    font-size: 11px;
    color: #000;
    background-color: #ece9d8;
}
.defs {
    position: absolute;
    width: 0;
    height: 0;
}
.win {
    position: relative;
    width: 1284px;
    height: 1024px;
    display: flex;
    flex-direction: column;
    overflow: hidden;
    background-color: #ece9d8;
}
/* sliver of the desktop window behind, on the left edge */
.win::before {
    content: "";
    position: absolute;
    left: 0;
    top: 26px;
    bottom: 0;
    width: 3px;
    z-index: 2;
    background: linear-gradient(#e4ecf8 0, #dbe6f6 120px, #8ea8d8 122px, #9fb6e0 100%);
}

/* title bar */
.titlebar {
    height: 26px;
    flex: none;
    display: flex;
    align-items: center;
    padding-left: 6px;
    background: linear-gradient(to bottom, #0058ee 0%, #3593ff 5%, #127dff 10%, #0262ee 16%, #0054e3 26%, #0055eb 56%, #005bf5 66%, #026afe 76%, #0062ef 86%, #0052d6 92%, #0040ab 96%, #003092 100%);
}
.appicon {
    width: 16px;
    height: 16px;
}
.titletext {
    margin-left: 4px;
    color: #fff;
    font-size: 13px;
    font-weight: bold;
    text-shadow: 1px 1px 0 #0a2a90;
}
.winbtns {
    margin-left: auto;
    margin-right: 3px;
    display: flex;
    gap: 3px;
}
.wbtn {
    position: relative;
    width: 20px;
    height: 20px;
    border: 1px solid #fff;
    border-radius: 3px;
    background: radial-gradient(circle at 35% 35%, #5a8cf0, #1c50d8);
    color: #fff;
    text-align: center;
}
.wclose {
    background: radial-gradient(circle at 35% 35%, #f09070, #d43a10);
    font-size: 13px;
    line-height: 18px;
    font-weight: bold;
}
.wmin {
    position: absolute;
    left: 4px;
    top: 12px;
    width: 8px;
    height: 3px;
    background-color: #fff;
}
.wmax {
    position: absolute;
    width: 8px;
    height: 8px;
    border: 1px solid #fff;
    border-top-width: 2px;
}
.wmax.back {
    left: 7px;
    top: 3px;
}
.wmax.front {
    left: 4px;
    top: 7px;
    background-color: #2c60e0;
}

/* menu + toolbars */
.menubar {
    position: relative;
    height: 30px;
    flex: none;
    display: flex;
    align-items: center;
    padding: 2px 0 0 15px;
    font-size: 10.500px;
    border-top: 1px solid #fff;
    border-bottom: 1px solid #aca899;
}
.menubar::before {
    content: "";
    position: absolute;
    left: 4px;
    top: 2px;
    bottom: 2px;
    width: 3px;
    border-left: 1px solid #fff;
    border-right: 1px solid #aca899;
}
.menubar span {
    flex: none;
}
.menubar span:nth-child(1) { width: 25px; }
.menubar span:nth-child(2) { width: 28px; }
.menubar span:nth-child(3) { width: 30px; }
.menubar span:nth-child(4) { width: 39px; }
.menubar span:nth-child(5) { width: 52px; letter-spacing: -.1px; }
.menubar span:nth-child(6) { width: 34px; }
.menubar span:nth-child(7) { width: 46px; }
.row {
    display: flex;
    flex: none;
}
.r29 { height: 29px; }
.r30 { height: 30px; }
.r31 { height: 31px; }
.bar {
    position: relative;
    height: 100%;
    display: flex;
    align-items: center;
    flex: none;
    padding-bottom: 1px;
    border-top: 1px solid #fff;
    border-bottom: 1px solid #aca899;
    border-right: 1px solid #aca899;
}
.bar::before {
    content: "";
    position: absolute;
    left: 4px;
    top: 2px;
    bottom: 2px;
    width: 3px;
    border-left: 1px solid #fff;
    border-right: 1px solid #aca899;
}
.bar.hnd::before {
    left: 3px;
}
.bar.nob {
    border-bottom: none;
}
.w992 { width: 992px; }
.w394 { width: 394px; }
.w868 { width: 868px; }
.w1112 { width: 1112px; }
.w378 { width: 378px; }
.w126 { width: 126px; }
.w146 { width: 146px; }
.w241 { width: 241px; }
.w156 { width: 156px; }
.w683 { width: 683px; }
.w196 { width: 196px; }
.w757 { width: 757px; }
.pl11 { padding-left: 11px; }
.pl12 { padding-left: 12px; }
.pl13 { padding-left: 13px; }
.pl15 { padding-left: 15px; }
.ml2 { margin-left: 2px; }
.ml3 { margin-left: 3px; }
.ml6 { margin-left: 6px; }
.ml7 { margin-left: 7px; }
.ml8 { margin-left: 8px; }
.ml10 { margin-left: 10px; }
.mr4 { margin-right: 4px; }
.mr6 { margin-right: 6px; }
.mr7 { margin-right: 7px; }
.mr8 { margin-right: 8px; }
.btn {
    width: 24px;
    height: 22px;
    flex: none;
    display: flex;
    align-items: center;
    justify-content: center;
    font-weight: normal;
}
.btn svg {
    width: 16px;
    height: 16px;
}
.btn.off {
    color: #aca899;
}
.btn.blk {
    color: #000;
}
.btn.pressed {
    border: 1px solid;
    border-color: #aca899 #fff #fff #aca899;
    background: repeating-conic-gradient(#ece9d8 0 25%, #fff 0 50%) 0 0 / 2px 2px;
}
.letter {
    font-family: "Liberation Serif", serif;
    font-weight: bold;
    font-size: 16px;
}
.letter.sm { font-size: 13px; }
.letter.it { font-style: italic; }
.letter.un { text-decoration: underline; }
.letter.bar-a {
    flex-direction: column;
    line-height: 13px;
    border-bottom: 3px solid #000;
    height: 18px;
    width: 16px;
    margin: 0 4px;
}
.sep {
    height: 24px;
    flex: none;
    background: linear-gradient(#aca899, #aca899) center / 1px 22px no-repeat;
}
.sep.r {
    background-position: calc(100% - 3px) center;
}
.sep.l {
    background-position: 4px center;
}
.sep.noline {
    background: none;
}
.s4 { width: 4px; }
.s5 { width: 5px; }
.s6 { width: 6px; }
.s7 { width: 7px; }
.s8 { width: 8px; }
.s11 { width: 11px; }
.s13 { width: 13px; }
.s14 { width: 14px; }
.s16 { width: 16px; }
.s17 { width: 17px; }
.item {
    display: flex;
    align-items: center;
    justify-content: space-between;
    flex: none;
}
.w50 { width: 50px; }
.w55 { width: 55px; }
.w66 { width: 66px; }
.w95 { width: 95px; }
.w32 { width: 32px; }
.w43 { width: 43px; }
.w54 { width: 54px; }
.w97 { width: 97px; }
.t27 { width: 27px; }
.t49 { width: 49px; }
.t53 { width: 53px; }
.t62 { width: 62px; }
.t82 { width: 82px; }
.t87 { width: 87px; }
.t109 { width: 109px; }
.tight1 { letter-spacing: -.25px; }
.tight2 { letter-spacing: -.45px; }
.tight3 { letter-spacing: -.15px; }
.arrow {
    flex: none;
    width: 0;
    height: 0;
    border-left: 5px solid transparent;
    border-right: 5px solid transparent;
    border-top: 5px solid #000;
}
.lbl {
    white-space: nowrap;
    flex: none;
}
.lbl.off {
    color: #aca899;
}
.combo {
    height: 21px;
    flex: none;
    display: flex;
    align-items: center;
    background-color: #fff;
    border: 2px solid;
    border-color: #7c7a6c #f6f4ea #f6f4ea #7c7a6c;
    font-size: 11px;
}
.combo .val {
    flex: 1;
    padding-left: 1px;
    white-space: nowrap;
    overflow: hidden;
}
.combo.dis {
    background-color: #ece9d8;
    color: #aca899;
}
.combo.font svg {
    width: 16px;
    height: 17px;
    margin: 0 0 0 1px;
    flex: none;
}
.c44 { width: 44px; }
.c56 { width: 56px; }
.c97 { width: 97px; }
.c146 { width: 146px; }
.c161 { width: 161px; }
.c168 { width: 168px; }
.c176 { width: 176px; }
.c182 { width: 182px; }
.c195 { width: 195px; }
.drop {
    width: 16px;
    height: 17px;
    flex: none;
    display: flex;
    align-items: center;
    justify-content: center;
    background-color: #ece9d8;
    border: 1px solid;
    border-color: #fff #716f64 #716f64 #fff;
}
.drop::after {
    content: "";
    border-left: 4px solid transparent;
    border-right: 4px solid transparent;
    border-top: 4px solid #000;
}
.dis .drop::after {
    border-top-color: #aca899;
}

/* table of contents + map */
.workspace {
    height: 739px;
    flex: none;
    display: flex;
    border-top: 2px solid #aca899;
    border-bottom: 1px solid #fff;
}
.toc {
    width: 210px;
    flex: none;
    padding: 2px 0 0 6px;
    border-right: 1px solid #8c8a7c;
    display: flex;
    flex-direction: column;
}
.tochead {
    height: 15px;
    flex: none;
    display: flex;
    align-items: center;
    padding-right: 4px;
    padding-left: 2px;
}
.gripper {
    flex: 1;
    height: 7px;
    border-top: 1px solid #aca899;
    border-bottom: 1px solid #aca899;
    box-shadow: inset 0 1px 0 #fff, inset 0 -1px 0 #fff;
}
.tocx {
    width: 11px;
    height: 11px;
    margin-left: 4px;
    font-size: 9px;
    line-height: 11px;
    text-align: center;
    font-weight: bold;
    border: 1px solid #fff;
    border-right-color: #aca899;
    border-bottom-color: #aca899;
}
.tree {
    position: relative;
    width: 188px;
    margin-left: 6px;
    height: 689px;
    flex: none;
    margin-top: 3px;
    background-color: #fff;
    border: 1px solid;
    border-color: #aca899 #d8d5c4 #d8d5c4 #aca899;
    outline: 1px solid #aca899;
    outline-offset: 3px;
    overflow: hidden;
}
.node {
    height: 16px;
    display: flex;
    align-items: center;
    white-space: nowrap;
    padding-left: 23px;
}
.node.top {
    padding-left: 4px;
}
.node strong {
    margin-left: 4px;
}
.snug {
    letter-spacing: -.08px;
}
.box {
    position: relative;
    width: 9px;
    height: 9px;
    flex: none;
    border: 1px solid #8c8a7c;
    background-color: #fff;
}
.box::before {
    content: "";
    position: absolute;
    left: 1px;
    top: 3px;
    width: 5px;
    height: 1px;
    background-color: #000;
}
.box.plus::after {
    content: "";
    position: absolute;
    left: 3px;
    top: 1px;
    width: 1px;
    height: 5px;
    background-color: #000;
}
.chk {
    width: 11px;
    height: 11px;
    flex: none;
    margin-left: 8px;
    margin-right: 7px;
    border: 1px solid #1c1c1c;
    font-style: normal;
    font-weight: bold;
    font-size: 10px;
    line-height: 9px;
    text-align: center;
}
.chk.warn {
    color: #aca899;
    border-color: #8c8a7c;
    margin-right: 0;
}
.bang {
    width: 7px;
    color: #e00000;
    font-weight: bold;
    font-style: normal;
    font-size: 12px;
}
.layers {
    width: 16px;
    height: 13px;
    margin-left: 6px;
}
.sym-point {
    width: 8px;
    height: 6px;
    margin-left: 36px;
}
.sym-line {
    width: 14px;
    height: 2px;
    margin-left: 35px;
    background-color: #00b060;
}
.selected {
    margin-left: -1px;
    padding: 1px;
    color: #fff;
    background-color: #316ac5;
    outline: 1px dotted #d08020;
    outline-offset: -1px;
}
.xpscroll {
    position: absolute;
    left: 1px;
    right: 1px;
    bottom: 0;
    height: 17px;
    display: flex;
    gap: 2px;
    background-color: #f3f1ec;
}
.xpbtn {
    width: 15px;
    height: 16px;
    border-radius: 2px;
    color: #1c3a80;
    font-size: 14px;
    line-height: 13px;
    text-align: center;
    background: linear-gradient(#dce8fc, #b4cbf5);
    border: 1px solid #fff;
}
.xpthumb {
    width: 138px;
    margin-right: auto;
    margin-left: 1px;
    height: 16px;
    border-radius: 2px;
    color: #8aa4d8;
    font-size: 9px;
    font-weight: normal;
    line-height: 14px;
    text-align: center;
    background: linear-gradient(#c8dafa, #b0c8f4);
    border: 1px solid #e8f0ff;
}
.tabs {
    display: flex;
    align-items: flex-start;
    padding-left: 2px;
    margin-top: 3px;
    height: 21px;
}
.tab {
    height: 18px;
    padding: 2px 4px 0;
    border: 1px solid #716f64;
    border-top: none;
    border-left-color: #fff;
    white-space: nowrap;
}
.tab.active {
    height: 21px;
    padding-top: 5px;
    width: 48px;
    padding-left: 6px;
    border-right-width: 2px;
}
.tab:nth-child(2) {
    width: 44px;
}
.tab:nth-child(3) {
    width: 90px;
    margin-left: 1px;
}
.mapcol {
    flex: 1;
    display: flex;
    flex-direction: column;
    min-width: 0;
}
.maprow {
    height: 720px;
    flex: none;
    display: flex;
}
.map {
    width: 1055px;
    height: 720px;
    flex: none;
    display: block;
    background-color: #fff;
}
.map polyline {
    fill: none;
}
.road polyline {
    stroke: #f6f67c;
    stroke-width: 3;
}
.road-thin {
    stroke: #f6f67c;
    stroke-width: 1;
    stroke-dasharray: 2 2;
}
.pink polyline {
    stroke: #ffb4e4;
    stroke-width: 2.500;
}
.arist polyline {
    stroke: #ffaa00;
    stroke-width: 5;
}
.arist-dash polyline {
    stroke: #000;
    stroke-width: 1.200;
    stroke-dasharray: 9 9;
}
.arist-dash.left {
    transform: translateX(-3px);
}
.arist-dash.right {
    transform: translateX(3px);
}
.arist-dash.right polyline {
    stroke-dashoffset: 9;
}
.picked {
    stroke: #00ffff;
    stroke-width: 3;
}
.picked-dash {
    stroke: #0000ff;
    stroke-width: 5;
    stroke-dasharray: 3 3;
}
.labels text {
    font-size: 9px;
    text-anchor: middle;
    dominant-baseline: middle;
    fill: #000;
}
.vscroll {
    width: 19px;
    flex: none;
    display: flex;
    flex-direction: column;
    padding-top: 2px;
    padding-bottom: 2px;
}
.track {
    background: repeating-conic-gradient(#ece9d8 0 25%, #fff 0 50%) 0 0 / 2px 2px;
}
.grow1 { height: 361px; }
.grow2 { flex: 1; }
.sbtn {
    width: 17px;
    height: 16px;
    flex: none;
    display: flex;
    align-items: center;
    justify-content: center;
    background-color: #ece9d8;
    border: 1px solid;
    border-color: #fff #716f64 #716f64 #fff;
}
.sbtn.h {
    height: 18px;
    width: 15px;
}
.sthumb {
    flex: none;
    background-color: #ece9d8;
    border: 1px solid;
    border-color: #fff #716f64 #716f64 #fff;
}
.sthumb.v {
    width: 17px;
    height: 8px;
}
.sthumb.h {
    width: 8px;
    height: 18px;
}
.tri {
    width: 0;
    height: 0;
    border: 4px solid transparent;
}
.tri.up { border-bottom-color: #000; border-top: none; }
.tri.down { border-top-color: #000; border-bottom: none; }
.tri.left { border-right-color: #000; border-left: none; }
.tri.right { border-left-color: #000; border-right: none; }
.hrow {
    height: 18px;
    flex: none;
    display: flex;
}
.viewbtns {
    width: 77px;
    flex: none;
    display: flex;
    align-items: center;
    padding-left: 1px;
    background-color: #fff;
}
.viewbtns svg {
    width: 16px;
    height: 16px;
    flex: none;
    margin-right: 1px;
}
.vline {
    width: 1px;
    height: 14px;
    margin: 0 3px 0 4px;
    background-color: #aca899;
}
.track.hl {
    width: 443px;
    flex: none;
}
.track.hr {
    flex: 1;
}
.corner {
    width: 19px;
    flex: none;
    background-color: #fff;
}

/* drawing + status */
.drawrow {
    height: 29px;
    flex: none;
    border-bottom: 2px solid #d8d5c4;
}
.statusbar {
    flex: 1;
    display: flex;
    justify-content: flex-end;
    gap: 3px;
    padding: 2px 1px 0 0;
    border-top: 1px solid #fff;
}
.cell {
    display: block;
    height: 100%;
    border: 1px solid;
    border-color: #aca899 #fff #fff #aca899;
}
.cell.small {
    width: 21px;
}
.cell.coords {
    width: 306px;
    padding-left: 1px;
    white-space: nowrap;
    line-height: 15px;
}

/* dialog */
.dialog {
    position: absolute;
    left: 302px;
    top: 277px;
    width: 317px;
    height: 356px;
    border: 3px solid #7b8dd8;
    border-top: none;
    border-radius: 7px 7px 0 0;
    background-color: #ece9d8;
    overflow: hidden;
    display: flex;
    flex-direction: column;
}
.dlgtitle {
    height: 29px;
    flex: none;
    margin: 0 -3px;
    display: flex;
    align-items: center;
    padding: 0 6px 0 7px;
    color: #dde4fa;
    font-size: 13px;
    font-weight: bold;
    background: linear-gradient(#7f92e0, #99a8e8 20%, #7b8fdc 70%, #8a9ce4);
}
.dlgbtns {
    margin-left: auto;
    display: flex;
    gap: 4px;
}
.dbtn {
    position: relative;
    width: 19px;
    height: 19px;
    border-radius: 3px;
    border: 1px solid #c8d2f8;
    color: #fff;
    text-align: center;
    font-size: 13px;
    line-height: 17px;
}
.dbtn.min {
    background-color: #3f74e4;
}
.dbtn.min i {
    position: absolute;
    left: 5px;
    top: 12px;
    width: 7px;
    height: 3px;
    background-color: #fff;
}
.dbtn.max {
    background-color: #7f98e4;
    border-color: #8fa4ec;
}
.dbtn.max i {
    position: absolute;
    left: 4px;
    top: 4px;
    width: 10px;
    height: 10px;
    border: 1px solid #9fb0ec;
    border-top-width: 2px;
}
.dbtn.cls {
    background-color: #b05a70;
}
.dlgbody {
    flex: 1;
    padding: 5px 6px 0 6px;
}
.street {
    display: flex;
    align-items: center;
    height: 19px;
}
.street label {
    width: 44px;
    padding-left: 6px;
    flex: none;
}
.street strong {
    margin-left: 7px;
    font-size: 12px;
}
.field {
    height: 19px;
    background-color: #fff;
    border: 2px solid;
    border-color: #7c7a6c #f6f4ea #f6f4ea #7c7a6c;
    padding-left: 1px;
    font-size: 11px;
    line-height: 15px;
    white-space: nowrap;
    overflow: hidden;
}
.field.gk {
    font-size: 10.500px;
    letter-spacing: -.3px;
}
.field.long {
    width: 201px;
    flex: none;
}
.group {
    margin: 0;
    padding: 0;
    min-width: 0;
    border: 1px solid #aca899;
    box-shadow: 1px 1px 0 #fff, inset 1px 1px 0 #fff;
}
.group legend {
    margin-left: 6px;
    padding: 0 3px;
    font-size: 11px;
    line-height: 13px;
}
.group.num {
    margin-top: 4px;
    height: 175px;
}
.group.rep {
    margin-top: 6px;
    height: 109px;
}
.heads {
    display: flex;
    height: 14px;
    padding-left: 49px;
    margin-top: 4px;
}
.heads span {
    width: 142px;
    flex: none;
}
.grid {
    display: grid;
    grid-template-columns: 39px 99px 49px 98px;
    row-gap: 2px;
    margin: 6px 0 0 6px;
    grid-auto-rows: 19px;
}
.grid label {
    align-self: center;
    white-space: nowrap;
}
.grid label:nth-child(4n+3) {
    margin-left: 10px;
}
.grid .ind {
    padding-left: 1px;
}
.grid .edit {
    grid-column: 2 / 4;
    justify-self: end;
    margin-right: 8px;
}
.actions {
    display: flex;
    padding-left: 7px;
    margin-top: 7px;
}
button {
    height: 23px;
    padding: 0;
    font-family: "Liberation Sans", Arial, sans-serif;
    font-size: 11px;
    color: #000;
    background-color: #ece9d8;
    border: 1px solid;
    border-color: #fff #716f64 #716f64 #fff;
    border-bottom-width: 2px;
    border-right-width: 2px;
}
button:disabled {
    color: #aca899;
}
.flip {
    width: 47px;
}
.sel {
    width: 58px;
    margin-left: 37px;
}
.apply {
    width: 120px;
    margin-left: 23px;
}
.memo {
    width: 284px;
    height: 62px;
    margin: 6px 0 0 7px;
}
.actions.two {
    margin-top: 1px;
    padding-left: 5px;
}
.actions.two .apply:first-child {
    margin-left: 0;
}
.actions.two .apply:last-child {
    margin-left: 47px;
}
```
